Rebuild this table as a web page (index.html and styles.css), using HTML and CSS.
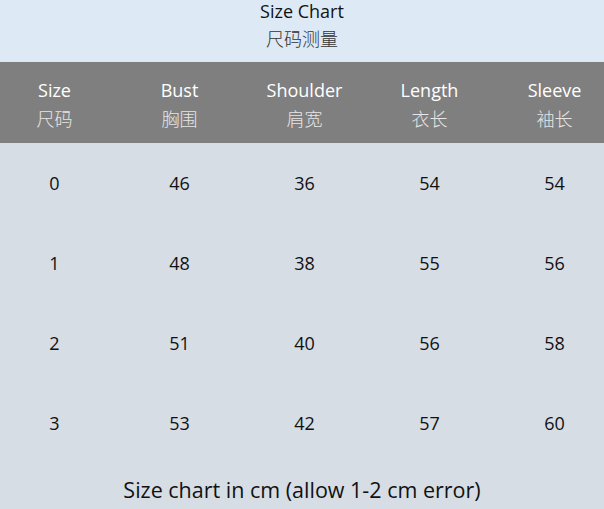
FILE: index.html
```html
<!DOCTYPE html>
<html lang="en">
<head>
<meta charset="utf-8">
<title>Size Chart</title>
<link rel="stylesheet" href="styles.css">
</head>
<body>
<div class="page">
  <header class="top">
    <div class="title">Size Chart</div>
    <div class="subtitle">尺码测量</div>
  </header>
  <div class="head grid">
    <div class="hcell"><span class="en">Size</span><span class="zh">尺码</span></div>
    <div class="hcell"><span class="en">Bust</span><span class="zh">胸围</span></div>
    <div class="hcell"><span class="en">Shoulder</span><span class="zh">肩宽</span></div>
    <div class="hcell"><span class="en">Length</span><span class="zh">衣长</span></div>
    <div class="hcell"><span class="en">Sleeve</span><span class="zh">袖长</span></div>
  </div>
  <div class="rows">
    <div class="row grid"><div>0</div><div>46</div><div>36</div><div>54</div><div>54</div></div>
    <div class="row grid"><div>1</div><div>48</div><div>38</div><div>55</div><div>56</div></div>
    <div class="row grid"><div>2</div><div>51</div><div>40</div><div>56</div><div>58</div></div>
    <div class="row grid"><div>3</div><div>53</div><div>42</div><div>57</div><div>60</div></div>
  </div>
  <footer class="note">Size chart in cm (allow 1-2 cm error)</footer>
</div>
</body>
</html>
```
FILE: styles.css
```css
html { background: #d6dde5; }
body {
  margin: 0;
  font-family: "Open Sans", "Noto Sans", sans-serif;
  color: #111;
}
.page { width: 604px; overflow: hidden; }
.top {
  background: #dde9f5;
  text-align: center;
  padding-bottom: 8px;
}
.title { font-size: 18px; line-height: 22px; color: #111; }
.subtitle {
  font-family: "Noto Sans CJK SC", sans-serif;
  font-weight: 300;
  font-size: 18px;
  line-height: 32px;
  color: #333;
}
.grid {
  display: grid;
  grid-template-columns: repeat(5, 125px);
  margin-left: -8px;
  width: 625px;
  text-align: center;
}
.head {
  background: #7f7f7f;
  padding: 14px 0 11px;
}
.hcell { display: flex; flex-direction: column; align-items: center; }
.en { font-size: 18px; line-height: 28px; color: #fff; }
.zh {
  font-family: "Noto Sans CJK SC", sans-serif;
  font-weight: 300;
  font-size: 18px;
  line-height: 28px;
  color: #e6e6e6;
}
.row { height: 80px; align-items: center; font-size: 18px; }
.note {
  text-align: center;
  font-size: 21.5px;
  line-height: 30px;
  padding-top: 12px;
}
```
